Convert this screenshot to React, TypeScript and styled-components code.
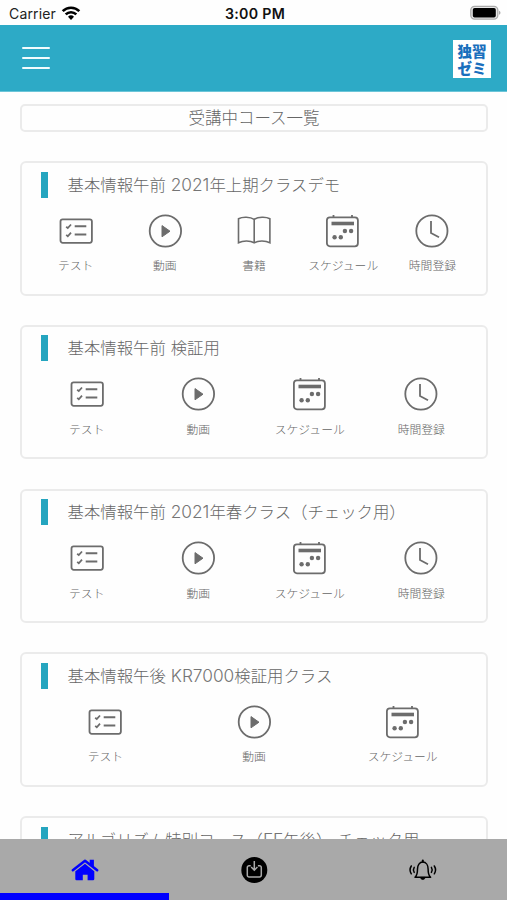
import React from 'react';
import styled, { createGlobalStyle } from 'styled-components';

const GlobalStyle = createGlobalStyle`
  * { box-sizing: border-box; }
  body { margin: 0; background: #fff; overflow: hidden; font-family: Inter, "Noto Sans CJK JP", sans-serif; }
  svg { display: block; overflow: visible; }
`;

const Screen = styled.div`
  display: flex;
  flex-direction: column;
  width: 507px;
  height: 900px;
  overflow: hidden;
  background: #fefefe;
`;

const StatusBar = styled.div`
  display: grid;
  grid-template-columns: 1fr auto 1fr;
  align-items: center;
  flex: none;
  height: 25px;
  padding: 2px 6px 0 9px;
  font-size: 14px;
  line-height: 22px;
  color: #222;
`;

const Carrier = styled.div`
  display: flex;
  align-items: center;
  gap: 6px;
  letter-spacing: 0.15px;
`;

const Time = styled.div`
  font-weight: 600;
  font-size: 14.2px;
  letter-spacing: 0.3px;
  color: #111;
`;

const BatterySlot = styled.div`
  display: flex;
  justify-content: flex-end;
`;

const Header = styled.header`
  display: flex;
  align-items: center;
  justify-content: space-between;
  flex: none;
  height: 67px;
  padding: 0 16px 0 22px;
  background: #2daac6;
  border-bottom: 1px solid #6cc5d8;
`;

const MenuButton = styled.button`
  display: flex;
  flex-direction: column;
  gap: 7.6px;
  padding: 0;
  border: 0;
  background: none;
`;

const MenuLine = styled.span`
  width: 28px;
  height: 2.2px;
  border-radius: 1px;
  background: #f2fcfe;
`;

const Logo = styled.div`
  width: 38px;
  height: 38px;
  margin-top: 1px;
  padding-top: 2px;
  background: #fff;
  color: #1a6fbd;
  text-align: center;
  white-space: pre-line;
  font: 900 14.5px/17.5px "Noto Sans CJK JP", sans-serif;
`;

const Content = styled.main`
  flex: 1;
  min-height: 0;
  overflow: hidden;
  padding: 11.5px 19px 0 20px;
`;

const PageTitle = styled.h1`
  display: flex;
  align-items: center;
  justify-content: center;
  height: 28px;
  margin: 0 0 29.5px;
  border: 2px solid #ebebeb;
  border-radius: 5px;
  font-size: 16.5px;
  line-height: 24px;
  font-weight: 300;
  color: #666;
`;

const Card = styled.section`
  height: 134.500px;
  margin-bottom: 29.250px;
  padding: 8.500px 9px 0;
  border: 2px solid #ebebeb;
  border-radius: 6px;
`;

const CardTitle = styled.h2`
  display: flex;
  align-items: center;
  gap: 20px;
  height: 26px;
  margin: 0 0 0 10px;
  font-size: 16.400px;
  line-height: 26px;
  font-weight: 300;
  white-space: nowrap;
  color: #666;

  &::before {
    content: '';
    width: 6.500px;
    height: 26px;
    background: #25a5bf;
  }
`;

const Latin = styled.span`
  font-size: 17.300px;
  color: #757575;
`;

const Actions = styled.div`
  display: flex;
  margin-top: 15px;
`;

const Action = styled.div`
  display: flex;
  flex: 1 1 0;
  flex-direction: column;
  align-items: center;
  gap: 8.500px;
  min-width: 0;
  font-size: 11.800px;
  line-height: 18px;
  font-weight: 300;
  white-space: nowrap;
  color: #666;
`;

const TabBar = styled.nav`
  display: grid;
  grid-template-columns: repeat(3, 1fr);
  flex: none;
  height: 61px;
  background: #a9a9a9;
`;

const Tab = styled.div<{ $active?: boolean }>`
  display: flex;
  align-items: center;
  justify-content: center;
  padding-top: 7px;
  border-bottom: 7.500px solid ${(p) => (p.$active ? '#00f' : 'transparent')};
`;

const iconProps = {
  width: 36,
  height: 36,
  viewBox: '0 0 36 36',
  fill: 'none',
  stroke: '#6c6c6c',
  strokeWidth: 1.8,
};

const TestIcon = () => (
  <svg {...iconProps}>
    <rect x="2.5" y="6.4" width="31.4" height="23.4" rx="2.2" />
    <path d="M8.2 13.7l1.6 1.4 3.2-3.6M8.2 21.900l1.6 1.4 3.2-3.6" />
    <path d="M16.700 13.300h11.600M16.700 21.600h11.600" strokeWidth="2" />
  </svg>
);

const PlayIcon = () => (
  <svg {...iconProps}>
    <circle cx="18.400" cy="18" r="15.700" />
    <path d="M15 12.600v11.200l8-5.600z" fill="#6c6c6c" strokeWidth="1" strokeLinejoin="round" />
  </svg>
);

const BookIcon = () => (
  <svg {...iconProps} strokeWidth={1.6}>
    <path d="M18.200 6.300C14.200 3.700 6.500 3.500 2.500 5.700v24c4.500-2.300 11.700-2.300 15.700.1 4-2.400 11.200-2.400 15.700-.1v-24C29.900 3.500 22.200 3.700 18.200 6.300z" />
    <path d="M18.200 6.300v23.200" />
  </svg>
);

const CalendarIcon = () => (
  <svg {...iconProps}>
    <rect x="1.900" y="4.300" width="31" height="29" rx="3" />
    <path d="M8.500 2v3M27 2v3" />
    <path d="M6.500 10.500h22.500" strokeWidth="3.600" />
    <g fill="#6c6c6c" stroke="none">
      <circle cx="19.900" cy="18" r="2.200" />
      <circle cx="26.100" cy="18" r="2.200" />
      <circle cx="9.600" cy="24.200" r="2.200" />
      <circle cx="15.800" cy="24.200" r="2.200" />
    </g>
  </svg>
);

const ClockIcon = () => (
  <svg {...iconProps}>
    <circle cx="17.900" cy="18" r="15.600" />
    <path d="M17 8v12l8 4.300" />
  </svg>
);

const WifiIcon = () => (
  <svg width="18" height="14" viewBox="0 0 18 14" fill="none" stroke="#000" strokeWidth="2.600">
    <path d="M.700 4.200a11.700 11.700 0 0 1 16.600 0M3.700 7.400a7.500 7.500 0 0 1 10.600 0" />
    <path d="M6 9.800a4.300 4.300 0 0 1 6 0l-3 3.200z" fill="#000" stroke="none" />
  </svg>
);

const BatteryIcon = () => (
  <svg width="31" height="15" viewBox="0 0 31 15">
    <rect x=".800" y=".300" width="27" height="12.800" rx="3.800" fill="#e8e8e8" stroke="#aaa" strokeWidth="1.300" />
    <rect x="2.800" y="2" width="23" height="9.500" rx="1.800" fill="#000" />
    <path d="M29 4.700c2 .8 2 3.200 0 4z" fill="#aaa" />
  </svg>
);

const HomeIcon = () => (
  <svg width="27" height="22" viewBox="0 0 27 22" fill="#00f">
    <path d="M4.300 12.200 14 4.800l9.300 7.400v7.900a1.200 1.200 0 0 1-1.200 1.200h-5.500v-5.600h-4.800v5.600H5.500a1.200 1.200 0 0 1-1.200-1.200z" />
    <path d="M1.800 11.400 14 1.700l12.200 9.700" fill="none" stroke="#a9a9a9" strokeWidth="4" />
    <path d="M1.800 11.300 14 1.700l12.200 9.600" fill="none" stroke="#00f" strokeWidth="2.500" strokeLinecap="round" strokeLinejoin="round" />
    <path d="M18.700.700h4.200v8L18.700 5.400z" />
  </svg>
);

const DownloadIcon = () => (
  <svg width="28" height="28" viewBox="0 0 28 28" fill="none" stroke="#a9a9a9">
    <circle cx="14.300" cy="14" r="13" fill="#000" stroke="none" />
    <path d="M10.700 9.700H9a1.700 1.700 0 0 0-1.700 1.700v7.800A1.700 1.700 0 0 0 9 20.900h10.600a1.700 1.700 0 0 0 1.700-1.700v-7.800a1.700 1.700 0 0 0-1.700-1.700h-1.700" strokeWidth="1.500" />
    <path d="M14.300 5v9M11.200 11l3.100 3.200 3.100-3.200" strokeWidth="1.500" />
  </svg>
);

const BellIcon = () => (
  <svg width="28" height="22" viewBox="0 0 28 22" fill="none" stroke="#000" strokeWidth="1.500" strokeLinecap="round">
    <path d="M6 18.300c2-1.800 2.500-3.500 2.500-8.400 0-3.800 2-6.800 5.300-6.800s5.300 3 5.300 6.800c0 4.900.5 6.600 2.500 8.400z" strokeLinejoin="round" />
    <path d="M13.800 1.500v1.300" strokeWidth="2" />
    <path d="M11.500 18.700c.3 2.600 4.300 2.600 4.600 0z" fill="#000" strokeWidth=".5" />
    <path d="M2.300 7c-1.600 2.500-1.600 5.300 0 7.800M5.200 8.400c-1 1.600-1 3.400 0 5M25.300 7c1.600 2.500 1.600 5.300 0 7.800M22.400 8.400c1 1.600 1 3.400 0 5" strokeWidth="1.500" />
  </svg>
);

const actions = {
  test: { label: 'テスト', Icon: TestIcon },
  video: { label: '動画', Icon: PlayIcon },
  book: { label: '書籍', Icon: BookIcon },
  schedule: { label: 'スケジュール', Icon: CalendarIcon },
  time: { label: '時間登録', Icon: ClockIcon },
};

type ActionKey = keyof typeof actions;

const courses: { title: string; items: ActionKey[] }[] = [
  { title: '基本情報午前 2021年上期クラスデモ', items: ['test', 'video', 'book', 'schedule', 'time'] },
  { title: '基本情報午前 検証用', items: ['test', 'video', 'schedule', 'time'] },
  { title: '基本情報午前 2021年春クラス（チェック用）', items: ['test', 'video', 'schedule', 'time'] },
  { title: '基本情報午後 KR7000検証用クラス', items: ['test', 'video', 'schedule'] },
  { title: 'アルゴリズム特別コース（FE午後） チェック用', items: ['test', 'video', 'schedule'] },
];

const MixedText = ({ text }: { text: string }) => (
  <span>
    {text.split(/([\x20-\x7e]+)/).map((run, i) => (i % 2 ? <Latin key={i}>{run}</Latin> : run))}
  </span>
);

export default function App() {
  return (
    <Screen>
      <GlobalStyle />
      <StatusBar>
        <Carrier>Carrier <WifiIcon /></Carrier>
        <Time>3:00 PM</Time>
        <BatterySlot><BatteryIcon /></BatterySlot>
      </StatusBar>
      <Header>
        <MenuButton aria-label="メニュー"><MenuLine /><MenuLine /><MenuLine /></MenuButton>
        <Logo>{'独習\nゼミ'}</Logo>
      </Header>
      <Content>
        <PageTitle>受講中コース一覧</PageTitle>
        {courses.map(({ title, items }) => (
          <Card key={title}>
            <CardTitle><MixedText text={title} /></CardTitle>
            <Actions>
              {items.map((key) => {
                const { label, Icon } = actions[key];
                return <Action key={key}><Icon />{label}</Action>;
              })}
            </Actions>
          </Card>
        ))}
      </Content>
      <TabBar>
        <Tab $active><HomeIcon /></Tab>
        <Tab><DownloadIcon /></Tab>
        <Tab><BellIcon /></Tab>
      </TabBar>
    </Screen>
  );
}
